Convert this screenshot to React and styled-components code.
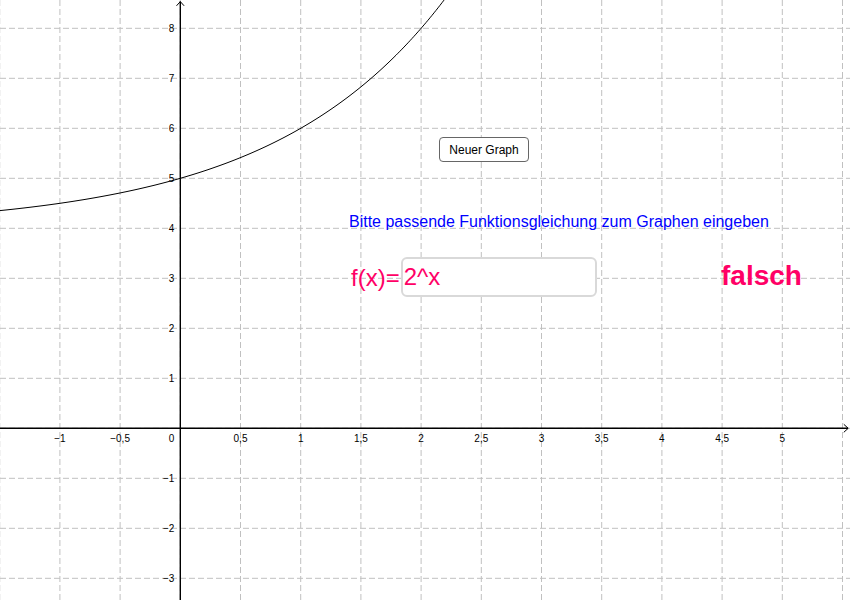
import React from 'react'
import styled, { createGlobalStyle } from 'styled-components'

const GlobalStyle = createGlobalStyle`
  html, body {
    margin: 0;
    padding: 0;
    background: #fff;
    overflow: hidden;
  }
  body {
    font-family: "Liberation Sans", Arial, sans-serif;
  }
`

const Applet = styled.div`
  position: relative;
  width: 850px;
  height: 600px;
  background: #fff;
  overflow: hidden;
`

const Graph = styled.svg`
  display: block;
  width: 850px;
  height: 600px;
`

const Overlay = styled.div`
  position: absolute;
  left: ${p => p.x}px;
  top: ${p => p.y}px;
`

const Button = styled.button`
  box-sizing: border-box;
  width: 90px;
  height: 25px;
  padding: 0;
  border: 1px solid #666;
  border-radius: 4px;
  background: #fff;
  font-family: "Liberation Sans", Arial, sans-serif;
  font-size: 12px;
  color: #000;
  cursor: pointer;
`

const Caption = styled.div`
  font-size: ${p => p.size}px;
  line-height: 1;
  font-weight: ${p => (p.bold ? 700 : 400)};
  color: ${p => p.color};
  white-space: nowrap;
`

const InputRow = styled.div`
  display: flex;
  align-items: center;
  gap: 1px;
`

const Label = styled.span`
  font-size: 24px;
  color: #ff0066;
  padding-top: 1px;
`

const Field = styled.input`
  box-sizing: border-box;
  width: 196px;
  height: 40px;
  padding: 0 1px;
  border: 2px solid #d9d9d9;
  border-radius: 6px;
  outline: none;
  font-family: "Liberation Sans", Arial, sans-serif;
  font-size: 24px;
  color: #ff0066;
  background: #fff;
`

const OX = 180.3
const OY = 428.3
const XU = 120.4
const YU = 50

const px = x => OX + x * XU
const py = y => OY - y * YU

const fmt = v => {
  const s = String(Math.abs(v)).replace('.', ',')
  return v < 0 ? '\u2212' + s : s
}

function Grid () {
  const lines = []
  for (let k = -3; k <= 11; k++) {
    const x = px(k * 0.5)
    lines.push(<line key={'v' + k} x1={x} y1={0} x2={x} y2={600} />)
  }
  for (let j = -3; j <= 8; j++) {
    const y = py(j)
    lines.push(<line key={'h' + j} x1={0} y1={y} x2={850} y2={y} />)
  }
  return (
    <g stroke="#c0c0c0" strokeWidth="1" strokeDasharray="6 3">
      {lines}
    </g>
  )
}

function Labels () {
  const items = []
  for (let k = -2; k <= 10; k++) {
    if (k === 0) continue
    const v = k * 0.5
    items.push(
      <text key={'x' + k} x={px(v)} y={OY + 14} textAnchor="middle">{fmt(v)}</text>
    )
  }
  for (let j = -3; j <= 8; j++) {
    if (j === 0) continue
    items.push(
      <text key={'y' + j} x={OX - 6} y={py(j) + 3.6} textAnchor="end">{fmt(j)}</text>
    )
  }
  items.push(<text key="o" x={OX - 6} y={OY + 14} textAnchor="end">0</text>)
  return (
    <g fontFamily='"Liberation Sans", Arial, sans-serif' fontSize="10" fill="#000">
      {items}
    </g>
  )
}

function Curve () {
  const pts = []
  for (let sx = 0; sx <= 450; sx += 2) {
    const x = (sx - OX) / XU
    const y = Math.pow(2, x) + 4
    pts.push(`${sx},${py(y).toFixed(2)}`)
  }
  return <polyline points={pts.join(' ')} fill="none" stroke="#000" strokeWidth="1" />
}

function Axes () {
  return (
    <g stroke="#000" fill="none">
      <line x1={0} y1={OY} x2={848} y2={OY} strokeWidth="1.4" />
      <polyline points={`843.8,424.3 848.2,${OY} 843.8,432.3`} strokeWidth="1" />
      <line x1={OX} y1={1.5} x2={OX} y2={600} strokeWidth="1.4" />
      <polyline points={`176.5,5.8 ${OX},1.6 184.1,5.8`} strokeWidth="1" />
    </g>
  )
}

export default function App () {
  return (
    <>
      <GlobalStyle />
      <Applet>
        <Graph viewBox="0 0 850 600">
          <Grid />
          <Axes />
          <Labels />
          <Curve />
        </Graph>
        <Overlay x={439} y={137}>
          <Button>Neuer Graph</Button>
        </Overlay>
        <Overlay x={349} y={213.8}>
          <Caption size={16} color="#0000ff">
            Bitte passende Funktionsgleichung zum Graphen eingeben
          </Caption>
        </Overlay>
        <Overlay x={351} y={257}>
          <InputRow>
            <Label>f(x)=</Label>
            <Field readOnly value="2^x" />
          </InputRow>
        </Overlay>
        <Overlay x={721} y={262}>
          <Caption size={28} bold color="#ff0066">falsch</Caption>
        </Overlay>
      </Applet>
    </>
  )
}
